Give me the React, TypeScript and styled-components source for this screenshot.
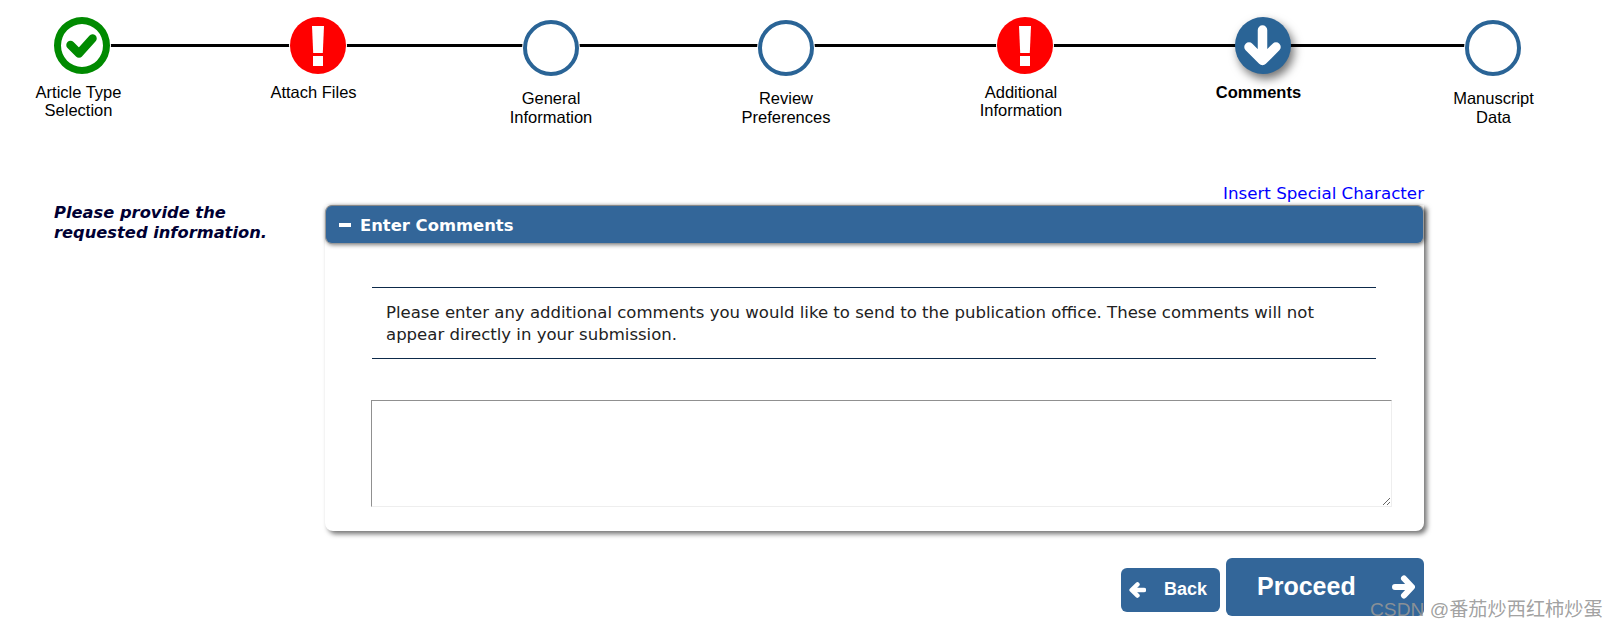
import React from "react";
import styled, { createGlobalStyle } from "styled-components";

const Global = createGlobalStyle`
  html, body { margin: 0; padding: 0; background: #fff; }
  body { font-family: "DejaVu Sans", Verdana, sans-serif; overflow: hidden; }
`;

const Page = styled.div`
  position: relative;
  width: 1617px;
  height: 630px;
  overflow: hidden;
`;

const Stepper = styled.div`
  position: relative;
  display: grid;
  grid-template-columns: 236px 233px 235px 239px 238px 230px 100px;
  margin-left: 31.5px;
  height: 184px;
  &::before {
    content: "";
    position: absolute;
    left: 50px;
    width: 1411px;
    top: 44px;
    height: 3px;
    background: #000;
  }
`;

const Step = styled.div`
  position: relative;
  width: 100px;
  display: flex;
  flex-direction: column;
  align-items: center;
`;

const Circle = styled.div<{ $kind: string }>`
  box-sizing: border-box;
  width: 56px;
  height: ${(p) => (p.$kind === "open" ? "56px" : "57px")};
  margin-top: ${(p) => (p.$kind === "open" ? "20px" : "17px")};
  border-radius: 50%;
  display: flex;
  align-items: center;
  justify-content: center;
  background: ${(p) =>
    p.$kind === "error" ? "#ff0000" : p.$kind === "current" ? "#2a6496" : "#fff"};
  border: ${(p) =>
    p.$kind === "done"
      ? "7.5px solid #008a00"
      : p.$kind === "open"
      ? "4px solid #2a6496"
      : "none"};
  box-shadow: ${(p) =>
    p.$kind === "current" ? "3px 5px 10px rgba(0,0,0,.55)" : "0 0 0 1px #fff"};
`;

const Label = styled.div<{ $shift?: number; $bold?: boolean; $open?: boolean }>`
  width: 180px;
  text-align: center;
  flex: none;
  font-family: "Liberation Sans", Arial, sans-serif;
  font-size: 16.5px;
  line-height: 18.5px;
  color: #000;
  font-weight: ${(p) => (p.$bold ? 700 : 400)};
  margin-top: ${(p) => (p.$open ? "13px" : "8.5px")};
  margin-left: ${(p) => (p.$shift ?? 0) * 2}px;
`;

const Main = styled.div`
  display: flex;
`;

const Prompt = styled.div`
  box-sizing: border-box;
  width: 325px;
  padding: 19px 0 0 54px;
  font-size: 16.3px;
  line-height: 20px;
  font-weight: 700;
  font-style: italic;
  color: #000033;
`;

const Content = styled.div`
  width: 1099px;
`;

const LinkRow = styled.div`
  height: 21px;
  text-align: right;
  font-size: 16.7px;
  line-height: 19px;
`;

const SpecialLink = styled.a`
  color: #0000ff;
  text-decoration: none;
`;

const Panel = styled.section`
  border-radius: 0 0 8px 8px;
  box-shadow: 3px 3px 5px rgba(0, 0, 0, 0.55);
  background: #fff;
`;

const PanelHeader = styled.header`
  box-sizing: border-box;
  height: 39px;
  display: flex;
  align-items: center;
  gap: 9px;
  padding: 1px 0 0 13px;
  background: #336699;
  border: 1px solid #9a9a9a;
  border-top-color: #888;
  border-radius: 7px;
  box-shadow: 1px 1px 4px rgba(0, 0, 0, 0.5);
  color: #fff;
  font-size: 16.4px;
  font-weight: 700;
`;

const Minus = styled.span`
  width: 12px;
  height: 4px;
  background: #fff;
`;

const PanelBody = styled.div`
  padding: 43px 48px 24px 47px;
`;

const Instructions = styled.div`
  padding: 14px 40px 13px 14px;
  border-top: 1px solid #0d2a4a;
  border-bottom: 1px solid #0d2a4a;
  font-size: 16.55px;
  line-height: 21.5px;
  color: #222;
`;

const Comments = styled.textarea`
  display: block;
  box-sizing: border-box;
  width: 1021px;
  height: 107px;
  margin: 41px 0 0 -1px;
  padding: 2px;
  border: 1px solid;
  border-color: #909090 #eee #eee #909090;
  outline: none;
  background: #fff;
`;

const Actions = styled.div`
  display: flex;
  justify-content: flex-end;
  align-items: flex-end;
  gap: 6px;
  margin-top: 27px;
`;

const ActionButton = styled.button<{ $big?: boolean }>`
  display: flex;
  align-items: center;
  justify-content: space-between;
  box-sizing: border-box;
  border: none;
  border-radius: 6px;
  background: #336699;
  color: #fff;
  font-family: "Liberation Sans", Arial, sans-serif;
  font-weight: 700;
  width: ${(p) => (p.$big ? "198px" : "99px")};
  height: ${(p) => (p.$big ? "58px" : "44px")};
  margin-bottom: ${(p) => (p.$big ? "0" : "4px")};
  font-size: ${(p) => (p.$big ? "25px" : "18px")};
  padding: ${(p) => (p.$big ? "0 9px 0 31px" : "0 13px 0 8px")};
`;

const ButtonText = styled.span`
  margin-bottom: 2px;
`;

const Watermark = styled.div`
  position: absolute;
  left: 1370px;
  top: 598px;
  font-family: "Liberation Sans", "Noto Sans CJK SC", sans-serif;
  font-size: 19.2px;
  line-height: 24px;
  color: rgba(150, 150, 150, 0.9);
  white-space: nowrap;
`;

const Exclaim = () => (
  <svg width="14" height="40" viewBox="0 0 14 40" fill="#fff" aria-hidden="true">
    <path d="M1 0h12l-1.2 27H2.2z" />
    <rect x="2" y="30" width="10" height="10" />
  </svg>
);

const CheckMark = () => (
  <svg width="31" height="26" viewBox="0 0 31 26" fill="none" stroke="#008a00" strokeWidth="8.5" strokeLinejoin="round" strokeLinecap="round" aria-hidden="true">
    <polyline points="4.5,12 13,20.5 26.5,5.5" />
  </svg>
);

const DownArrow = () => (
  <svg width="37" height="41" viewBox="0 0 37 41" fill="none" stroke="#fff" strokeWidth="9.5" strokeLinejoin="round" strokeLinecap="round" aria-hidden="true">
    <path d="M18.5 5V35M5 22L18.5 35.5L32 22" />
  </svg>
);

const LeftArrow = () => (
  <svg width="17" height="16" viewBox="0 0 17 16" fill="none" stroke="#fff" strokeWidth="4.4" strokeLinejoin="round" strokeLinecap="round" aria-hidden="true">
    <path d="M15 8H3M8.5 2.4L2.6 8L8.5 13.6" />
  </svg>
);

const RightArrow = () => (
  <svg width="23" height="24" viewBox="0 0 23 24" fill="none" stroke="#fff" strokeWidth="6" strokeLinejoin="round" strokeLinecap="round" aria-hidden="true">
    <path d="M3 12H19M12 3.5L20 12L12 20.5" />
  </svg>
);

type StepData = {
  lines: string[];
  kind: "done" | "error" | "open" | "current";
  shift?: number;
};

const steps: StepData[] = [
  { lines: ["Article Type", "Selection"], kind: "done", shift: -3 },
  { lines: ["Attach Files"], kind: "error", shift: -4 },
  { lines: ["General", "Information"], kind: "open", shift: 0.5 },
  { lines: ["Review", "Preferences"], kind: "open", shift: 0.5 },
  { lines: ["Additional", "Information"], kind: "error", shift: -3.5 },
  { lines: ["Comments"], kind: "current", shift: -4 },
  { lines: ["Manuscript", "Data"], kind: "open", shift: 1 },
];

export default function App() {
  return (
    <Page>
      <Global />
      <Stepper>
        {steps.map((s) => (
          <Step key={s.lines.join(" ")}>
            <Circle $kind={s.kind}>
              {s.kind === "done" && <CheckMark />}
              {s.kind === "error" && <Exclaim />}
              {s.kind === "current" && <DownArrow />}
            </Circle>
            <Label $shift={s.shift} $bold={s.kind === "current"} $open={s.kind === "open"}>
              {s.lines.map((l) => (
                <div key={l}>{l}</div>
              ))}
            </Label>
          </Step>
        ))}
      </Stepper>
      <Main>
        <Prompt>
          Please provide the
          <br />
          requested information.
        </Prompt>
        <Content>
          <LinkRow>
            <SpecialLink href="#">Insert Special Character</SpecialLink>
          </LinkRow>
          <Panel>
            <PanelHeader>
              <Minus />
              Enter Comments
            </PanelHeader>
            <PanelBody>
              <Instructions>
                Please enter any additional comments you would like to send to the publication office. These comments will not appear directly in your submission.
              </Instructions>
              <Comments />
            </PanelBody>
          </Panel>
          <Actions>
            <ActionButton>
              <LeftArrow />
              <ButtonText>Back</ButtonText>
            </ActionButton>
            <ActionButton $big>
              <ButtonText>Proceed</ButtonText>
              <RightArrow />
            </ActionButton>
          </Actions>
        </Content>
      </Main>
      <Watermark>CSDN @番茄炒西红柿炒蛋</Watermark>
    </Page>
  );
}
